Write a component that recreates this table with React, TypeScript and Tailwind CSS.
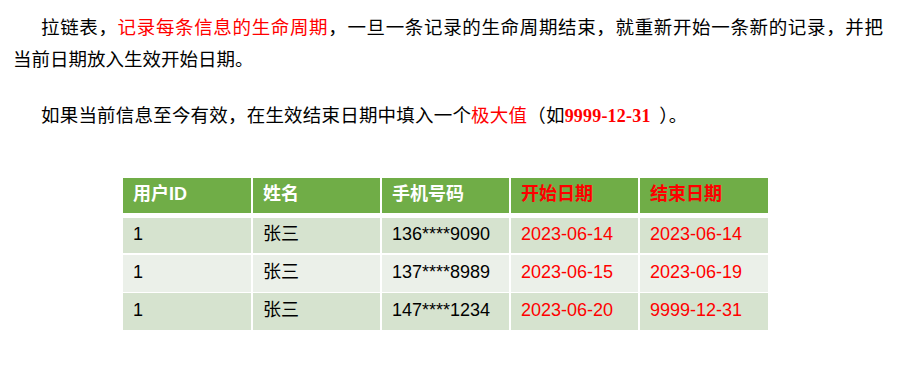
import React from 'react';

const rows = [
  { id: '1', name: '张三', phone: ['136', '9090'], start: '2023-06-14', end: '2023-06-14', band: 'bg-[#d6e3cf]', h: 'h-[40px] border-t-[5px]' },
  { id: '1', name: '张三', phone: ['137', '8989'], start: '2023-06-15', end: '2023-06-19', band: 'bg-[#ebf0e9]', h: 'h-[39px] border-t-[2px]' },
  { id: '1', name: '张三', phone: ['147', '1234'], start: '2023-06-20', end: '9999-12-31', band: 'bg-[#d6e3cf]', h: 'h-[38px] border-t-[1px]' },
];

const cjk = 'font-["Noto_Sans_CJK_SC",sans-serif]';
const tableFont = 'font-["Liberation_Sans","Noto_Sans_CJK_SC",sans-serif]';

const Cell = ({ children, first = false, className = '' }: { children: React.ReactNode; first?: boolean; className?: string }) => (
  <div className={`flex items-center pl-[10px] pb-[2px] ${first ? '' : 'border-l-2 border-white'} ${className}`}>
    {children}
  </div>
);

const App = () => {
  return (
    <div className="h-[387px] w-[897px] overflow-hidden bg-white text-black">
      <div className={`${cjk} text-[18.5px] leading-[32px] pt-[10px]`}>
        <div className="ml-[41px] mr-[14px] text-justify [text-align-last:justify]">
          拉链表，<span className="text-[#ff0000]">记录每条信息的生命周期</span>，一旦一条记录的生命周期结束，就重新开始一条新的记录，并把
        </div>
        <div className="ml-[13px]">当前日期放入生效开始日期。</div>
        <div className="ml-[41px] mt-[24px] whitespace-pre tracking-[0.2px]">
          如果当前信息至今有效，在生效结束日期中填入一个<span className="text-[#ff0000]">极大值</span>（如<span className='font-["Liberation_Serif",serif] text-[18px] font-bold text-[#ff0000]'>9999-12-31</span>  ）。
        </div>
      </div>

      <div className={`${tableFont} ml-[123px] mt-[46px] w-[645px] text-[18px]`}>
        <div className="grid h-[35px] grid-cols-[128px_129px_129px_129px_130px] bg-[#70ad47] font-bold text-white">
          <Cell first>用户ID</Cell>
          <Cell>姓名</Cell>
          <Cell>手机号码</Cell>
          <Cell className="text-[#ff0000]">开始日期</Cell>
          <Cell className="text-[#ff0000]">结束日期</Cell>
        </div>
        {rows.map((row, i) => (
          <div
            key={i}
            className={`grid grid-cols-[128px_129px_129px_129px_130px] border-white ${row.h} ${row.band}`}
          >
            <Cell first>{row.id}</Cell>
            <Cell>{row.name}</Cell>
            <Cell>
              {row.phone[0]}
              <span>****</span>
              {row.phone[1]}
            </Cell>
            <Cell className="text-[#ff0000]">{row.start}</Cell>
            <Cell className="text-[#ff0000]">{row.end}</Cell>
          </div>
        ))}
      </div>
    </div>
  );
};

export default App;
